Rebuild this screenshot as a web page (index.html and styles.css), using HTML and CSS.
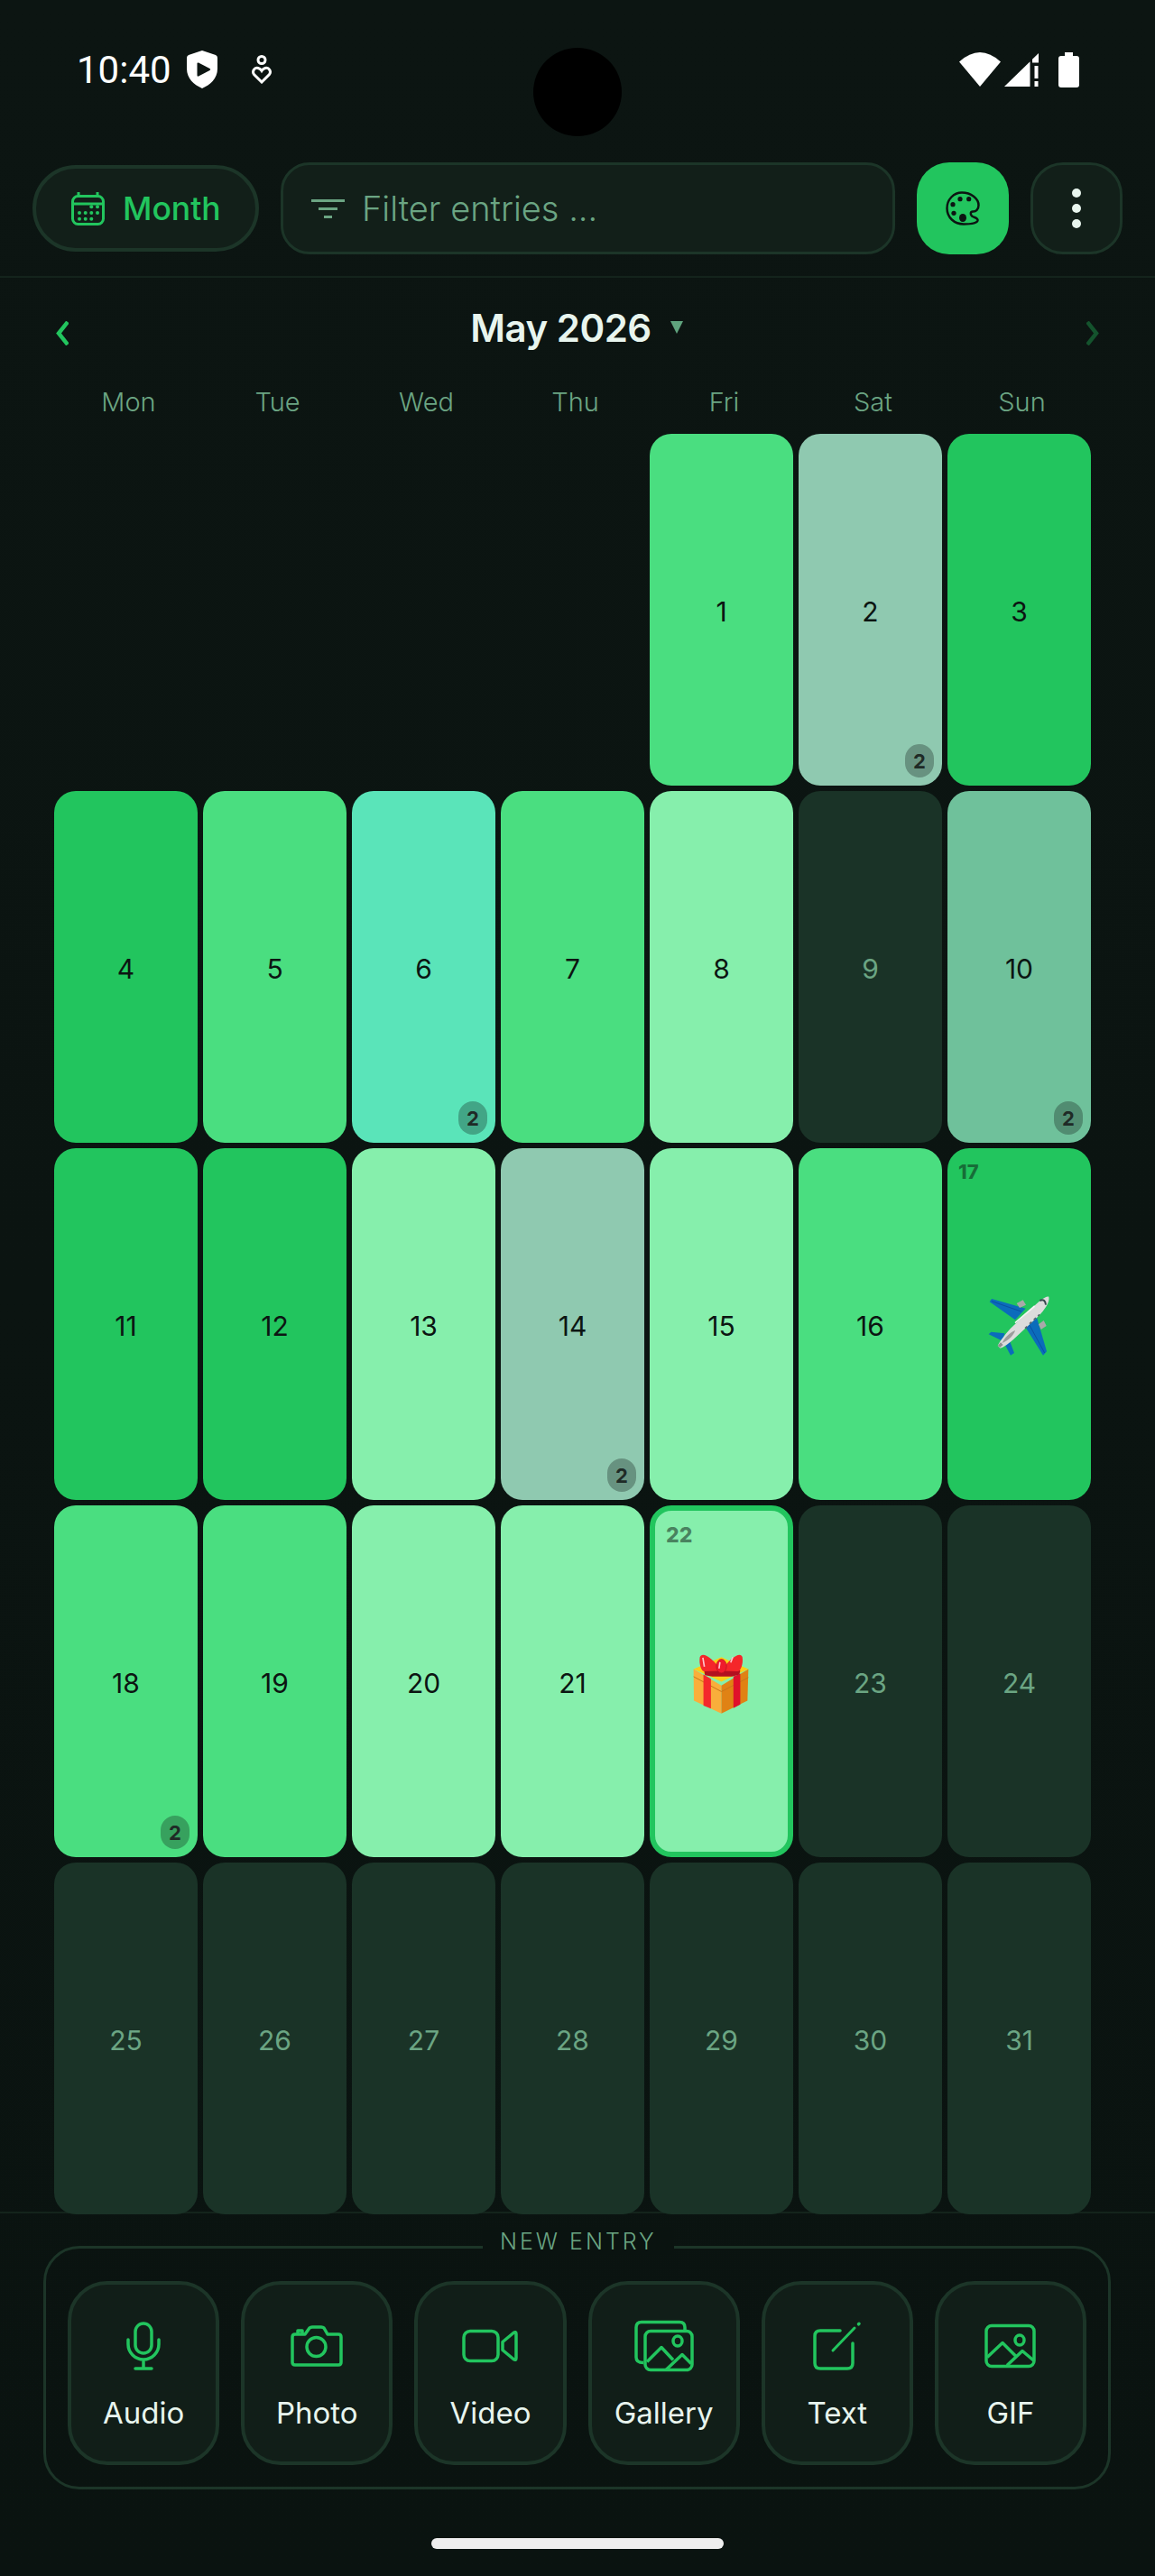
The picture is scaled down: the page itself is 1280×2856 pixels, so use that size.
FILE: index.html
```html
<!DOCTYPE html>
<html lang="en">
<head>
  <meta charset="UTF-8">
  <meta name="viewport" content="width=device-width, initial-scale=1.0">
  <title>Calendar</title>
  <link rel="stylesheet" href="styles.css">
</head>
<body>
  <div class="status">
    <span class="time">10:40</span>
    <svg class="shield" width="34" height="42" viewBox="0 0 34 42"><path d="M17 0L32 5Q34 6 34 8V20C34 31 26 38 17 42C8 38 0 31 0 20V8Q0 6 2 5Z" fill="#fff"/><path d="M11.5 14.5Q11.5 13 13 13.500L25.500 20Q27 21 25.500 22L13 28.500Q11.500 29 11.500 27.500Z" fill="#0c1512"/></svg>
    <svg class="care" width="22" height="32" viewBox="0 0 22 32" fill="none" stroke="#fff" stroke-width="3"><circle cx="11" cy="5.500" r="4"/><path d="M11 30L2.500 21.500C0 18 3 13.500 7 14.500C9 15 10 16 11 17.500C12 16 13 15 15 14.500C19 13.500 22 18 19.500 21.500Z"/></svg>
    <div class="status-right">
      <svg width="46" height="38" viewBox="0 0 46 38"><path d="M0 10.500Q23 -10.500 46 10.500L23 38Z" fill="#fff"/></svg>
      <svg width="38" height="37" viewBox="0 0 38 37" fill="#fff"><path d="M0 37L28.500 9.300V37Z"/><path d="M31 6.800L38 0V10.500H31Z"/><rect x="33.500" y="14" width="4" height="14"/><rect x="33.500" y="31" width="4" height="6"/></svg>
      <svg class="battery" width="23" height="39" viewBox="0 0 23 39" fill="#fff"><rect x="7" width="9" height="6"/><rect y="4" width="23" height="35" rx="3"/></svg>
    </div>
  </div>
  <div class="cutout"></div>

  <div class="toolbar">
    <div class="view-pill">
      <svg width="37" height="37" viewBox="0 0 37 37" fill="none" stroke="#22c55e" stroke-width="3">
        <rect x="1.500" y="4.500" width="34" height="31" rx="6"/>
        <path d="M1.500 13H35.500M8 0V4M29 0V4"/>
        <g fill="#22c55e" stroke="none">
          <circle cx="22.300" cy="16.300" r="2"/><circle cx="29" cy="16.300" r="2"/>
          <circle cx="9" cy="23" r="2"/><circle cx="15.700" cy="23" r="2"/><circle cx="22.300" cy="23" r="2"/><circle cx="29" cy="23" r="2"/>
          <circle cx="9" cy="29.700" r="2"/><circle cx="15.700" cy="29.700" r="2"/><circle cx="22.300" cy="29.700" r="2"/>
        </g>
      </svg>
      <span>Month</span>
    </div>
    <div class="filter">
      <svg width="37" height="21" viewBox="0 0 37 21" fill="none" stroke="#6ba583" stroke-width="3"><path d="M0 1.500H37M8 10.500H29M14 19.500H23"/></svg>
      <span>Filter entries ...</span>
    </div>
    <div class="square-btn palette-btn">
      <svg width="38" height="38" viewBox="0 0 38 38" fill="none" stroke="#0c1512" stroke-width="2.500">
        <path d="M18 1.500C28 1.500 36.500 8 36.500 15.500C36.500 20 33.500 23 30 22.500C27.500 22.500 27 25.500 29 27.500C32 29.500 36 29.500 35.500 32.500C34.500 36 27 36.500 20 36.500C9.500 36.500 1.500 29 1.500 19C1.500 9 9 1.500 18 1.500Z"/>
        <g fill="#0c1512" stroke="none">
          <circle cx="16" cy="8.700" r="2.600"/><circle cx="25.700" cy="8.700" r="2.600"/><circle cx="8" cy="14.700" r="2.600"/><circle cx="9" cy="24.300" r="2.600"/><ellipse cx="19" cy="29.500" rx="4" ry="4.500"/>
        </g>
      </svg>
    </div>
    <div class="square-btn more-btn">
      <svg width="10" height="44" viewBox="0 0 10 44" fill="#e8f5ee"><circle cx="5" cy="5" r="5"/><circle cx="5" cy="22" r="5"/><circle cx="5" cy="39" r="5"/></svg>
    </div>
  </div>

  <div class="month-nav">
    <svg class="chevron" width="14" height="27" viewBox="0 0 14 27" fill="none" stroke="#22c55e" stroke-width="4.500"><path d="M13 1L3 13.500L13 26"/></svg>
    <div class="month-title">
      <span>May 2026</span>
      <i class="caret"></i>
    </div>
    <svg class="chevron" width="14" height="27" viewBox="0 0 14 27" fill="none" stroke="#14532d" stroke-width="4.500"><path d="M1 1L11 13.500L1 26"/></svg>
  </div>

  <div class="weekdays">
    <span>Mon</span><span>Tue</span><span>Wed</span><span>Thu</span><span>Fri</span><span>Sat</span><span>Sun</span>
  </div>

  <div class="grid">
    <div></div><div></div><div></div><div></div>
    <div class="day mid">1</div>
    <div class="day sage">2<b class="badge">2</b></div>
    <div class="day strong">3</div>

    <div class="day strong">4</div>
    <div class="day mid">5</div>
    <div class="day aqua">6<b class="badge">2</b></div>
    <div class="day mid">7</div>
    <div class="day light">8</div>
    <div class="day empty">9</div>
    <div class="day moss">10<b class="badge">2</b></div>

    <div class="day strong">11</div>
    <div class="day strong">12</div>
    <div class="day light">13</div>
    <div class="day sage">14<b class="badge">2</b></div>
    <div class="day light">15</div>
    <div class="day mid">16</div>
    <div class="day strong">
      <small class="corner">17</small>
      <svg class="emoji" width="70" height="70" viewBox="60 45 210 210">
        <path d="M65 70L72 60L185 92L150 130Z" fill="#0b6cbb"/>
        <path d="M185 155L222 122L255 235L243 248Z" fill="#0b6cbb"/>
        <path d="M72 68L170 102M198 148L248 240" stroke="#0a4fa3" stroke-width="3" fill="none"/>
        <path d="M155 75L176 64L186 80L165 90Z" fill="#a9a9a9"/>
        <path d="M228 145L245 132L254 150L236 162Z" fill="#a9a9a9"/>
        <path d="M62 178L70 170L115 175L108 200Z" fill="#0b6cbb"/>
        <path d="M115 210L130 195L147 240L135 248Z" fill="#0b6cbb"/>
        <path d="M262 53C266 70 250 95 225 120L150 190C130 208 112 222 100 224L92 216C100 200 115 180 135 158L205 92C225 72 250 50 262 53Z" fill="#dcdcdc"/>
        <path d="M100 222L92 216L102 205L110 213Z" fill="#8f8f8f"/>
        <path d="M106 208C115 190 128 175 150 165C146 180 130 197 106 208Z" fill="#9c9c9c"/>
        <path d="M150 140L215 84" stroke="#f4f4f4" stroke-width="5" fill="none"/>
        <path d="M232 66Q250 58 252 80" stroke="#37474f" stroke-width="6" fill="none"/>
        <path d="M183 158L190 152M198 143L205 137M212 130L219 123M226 118L231 112" stroke="#56646e" stroke-width="5" fill="none"/>
      </svg>
    </div>

    <div class="day mid">18<b class="badge">2</b></div>
    <div class="day mid">19</div>
    <div class="day light">20</div>
    <div class="day light">21</div>
    <div class="day light today">
      <small class="corner">22</small>
      <svg class="emoji" width="73" height="77" viewBox="190 530 220 230">
        <path d="M207 600L300 655V748L208 705Z" fill="#f9ae3b"/>
        <path d="M300 655L390 600L387 705L300 748Z" fill="#e08214"/>
        <path d="M207 600L300 560L390 600L300 642Z" fill="#fdd017"/>
        <path d="M207 625L300 675L390 628" stroke="#c8741a" stroke-width="3" fill="none"/>
        <path d="M240 618L265 632V732L240 722Z" fill="#f4282c"/>
        <path d="M340 625L363 615V718L340 730Z" fill="#e0102a"/>
        <path d="M242 604H363L360 618L335 625H270L245 620Z" fill="#b3101f"/>
        <path d="M300 606C270 560 235 540 228 560C224 585 235 612 245 607Z" fill="#f5262a"/>
        <path d="M300 606C330 560 365 540 370 560C374 585 362 612 352 607Z" fill="#f5262a"/>
        <ellipse cx="300" cy="590" rx="17" ry="23" fill="#ef1c2c" stroke="#b3101f" stroke-width="2"/>
        <path d="M238 562L243 592M295 577L292 598M338 560L331 578" stroke="#ffc4cc" stroke-width="5" fill="none"/>
      </svg>
    </div>
    <div class="day empty">23</div>
    <div class="day empty">24</div>

    <div class="day empty">25</div>
    <div class="day empty">26</div>
    <div class="day empty">27</div>
    <div class="day empty">28</div>
    <div class="day empty">29</div>
    <div class="day empty">30</div>
    <div class="day empty">31</div>
  </div>

  <div class="footer">
    <div class="new-entry">
      <span class="legend">NEW ENTRY</span>
      <div class="entry-btn">
        <svg width="38" height="54" viewBox="0 0 38 54" fill="none" stroke="#22c55e" stroke-width="3.500" stroke-linecap="round"><rect x="10" y="2" width="18" height="33" rx="9"/><path d="M2 20V25A17 17 0 0 0 36 25V20M19 42V52M10 52H28"/></svg>
        <span>Audio</span>
      </div>
      <div class="entry-btn">
        <svg width="58" height="46" viewBox="0 0 58 46" fill="none" stroke="#22c55e" stroke-width="3.500" stroke-linejoin="round"><path d="M5 10H16L21 3Q22 2 24 2H34Q36 2 37 3L41 10H53Q56 10 56 13V41Q56 44 53 44H5Q2 44 2 41V13Q2 10 5 10Z"/><path d="M8 9V6H13V9"/><circle cx="28.500" cy="24" r="10.500"/></svg>
        <span>Photo</span>
      </div>
      <div class="entry-btn">
        <svg width="62" height="37" viewBox="0 0 62 37" fill="none" stroke="#22c55e" stroke-width="3.500" stroke-linejoin="round"><rect x="2" y="2" width="38" height="33" rx="7"/><path d="M45 14L57 4Q60 2 60 5V32Q60 35 57 33L45 23Z"/></svg>
        <span>Video</span>
      </div>
      <div class="entry-btn">
        <svg width="66" height="57" viewBox="0 0 66 57" fill="none" stroke="#22c55e" stroke-width="3.500" stroke-linejoin="round"><path d="M10 47Q2 47 2 41V8Q2 2 8 2H50Q56 2 56 8V11"/><rect x="12" y="12" width="52" height="43" rx="6"/><ellipse cx="48" cy="23" rx="5" ry="5.500"/><path d="M14 46L30 30L43 44M35 55L53 38L63 48"/></svg>
        <span>Gallery</span>
      </div>
      <div class="entry-btn">
        <svg width="54" height="54" viewBox="0 0 54 54" fill="none" stroke="#22c55e" stroke-width="3.500" stroke-linecap="round"><path d="M30 10H8Q2 10 2 16V46Q2 52 8 52H38Q44 52 44 46V24"/><path d="M22 32L46 7" stroke-width="3"/><path d="M50.500 2.800L51 2.300"/></svg>
        <span>Text</span>
      </div>
      <div class="entry-btn">
        <svg width="57" height="49" viewBox="0 0 57 49" fill="none" stroke="#22c55e" stroke-width="3.500" stroke-linejoin="round"><rect x="2" y="2" width="53" height="45" rx="6"/><ellipse cx="39" cy="18" rx="5" ry="5.500"/><path d="M3 37L20 21L36 37M25 46L42 30L55 41"/></svg>
        <span>GIF</span>
      </div>
    </div>
    <div class="home-bar"></div>
  </div>
</body>
</html>
```

FILE: styles.css
```css
* {
  box-sizing: border-box;
}
body {
  margin: 0;
  width: 1280px;
  height: 2856px;
  overflow: hidden;
  position: relative;
  font-family: Inter, "Liberation Sans", sans-serif;
  background: linear-gradient(#0c1512, #0a1310);
  color: #e8f5ee;
}

/* status bar */
.status {
  height: 154px;
  margin-bottom: 26px;
  padding: 0 84px 0 85px;
  display: flex;
  align-items: center;
}
.time {
  font-family: Roboto, sans-serif;
  font-size: 42px;
  color: #fff;
}
.shield {
  margin-left: 17px;
}
.care {
  margin-left: 38px;
}
.status-right {
  margin-left: auto;
  display: flex;
  align-items: center;
  gap: 4px;
}
.battery {
  margin-left: 18px;
}
.cutout {
  position: absolute;
  left: 591px;
  top: 53px;
  width: 98px;
  height: 98px;
  border-radius: 50%;
  background: #000;
}

/* top controls */
.toolbar {
  display: flex;
  align-items: center;
  gap: 24px;
  padding: 0 36px 24px;
  border-bottom: 2px solid #14241c;
}
.view-pill {
  width: 251px;
  height: 96px;
  display: flex;
  align-items: center;
  gap: 20px;
  padding-left: 39px;
  border: 4px solid #1c3528;
  border-radius: 48px;
  background: #121f19;
  color: #22c55e;
  font-size: 35.5px;
  font-weight: 500;
}
.filter {
  flex: 1;
  height: 102px;
  display: flex;
  align-items: center;
  gap: 19px;
  padding-left: 31px;
  border: 3px solid #1c3528;
  border-radius: 32px;
  background: #121f19;
  color: #6ba583;
  font-size: 38px;
  font-weight: 300;
}
.square-btn {
  width: 102px;
  height: 102px;
  display: flex;
  align-items: center;
  justify-content: center;
  border-radius: 36px;
}
.palette-btn {
  background: #22c55e;
}
.more-btn {
  background: #121f19;
  border: 3px solid #1c3528;
}

/* month header */
.month-nav {
  height: 110px;
  padding: 0 62px;
  display: flex;
  align-items: center;
  justify-content: space-between;
}
.chevron {
  margin-top: 12px;
}
.month-title {
  display: flex;
  align-items: center;
  gap: 21px;
  margin-right: 2px;
  font-size: 42px;
  font-weight: 600;
  letter-spacing: -0.5px;
}
.caret {
  width: 0;
  height: 0;
  border-left: 7px solid transparent;
  border-right: 7px solid transparent;
  border-top: 14px solid #5fa37d;
}
.weekdays {
  height: 54px;
  margin-bottom: 9px;
  padding: 0 60px 0 66px;
  display: grid;
  grid-template-columns: repeat(7, 153px);
  column-gap: 12px;
  align-items: center;
  justify-items: center;
  color: #6ba583;
  font-size: 29px;
  font-weight: 300;
}

/* calendar */
.grid {
  position: relative;
  z-index: 1;
  margin-bottom: -3px;
  padding-left: 60px;
  display: grid;
  grid-template-columns: repeat(7, 159px);
  grid-auto-rows: 390px;
  gap: 6px;
}
.day {
  position: relative;
  padding-top: 3px;
  display: flex;
  align-items: center;
  justify-content: center;
  border-radius: 24px;
  color: #0c1512;
  font-size: 30px;
}
.strong { background: #22c55e; }
.mid { background: #4ade80; }
.light { background: #86efac; }
.aqua { background: #5ae4b9; }
.sage { background: #8fc9b0; }
.moss { background: #6fc19b; }
.empty {
  background: #1a3327;
  color: #6ba583;
}
.today {
  border: 6px solid #22c55e;
}
.badge {
  position: absolute;
  right: 9px;
  bottom: 9px;
  width: 32px;
  height: 37px;
  display: flex;
  align-items: center;
  justify-content: center;
  border-radius: 16px;
  background: rgba(12, 21, 18, 0.3);
  color: #1f2a26;
  font-size: 22px;
  font-weight: 700;
}
.corner {
  position: absolute;
  left: 12px;
  top: 13px;
  color: rgba(12, 21, 18, 0.5);
  font-size: 22px;
  font-weight: 800;
}
.today .corner {
  top: 13px;
  font-size: 23px;
}

/* bottom panel */
.footer {
  padding-top: 36px;
  border-top: 2px solid #14241c;
}
.new-entry {
  position: relative;
  width: 1183px;
  height: 270px;
  margin-left: 48px;
  padding: 36px 24px 24px;
  display: flex;
  gap: 24px;
  border: 3px solid #1c3528;
  border-radius: 40px;
}
.legend {
  position: absolute;
  left: 484px;
  top: -23px;
  padding: 0 19px;
  background: #0a1310;
  color: #6ba583;
  font-size: 25px;
  font-weight: 300;
  letter-spacing: 3px;
}
.entry-btn {
  flex: 1;
  height: 204px;
  display: flex;
  flex-direction: column;
  align-items: center;
  border: 4px solid #1c3528;
  border-radius: 44px;
  background: #111e18;
  font-size: 33px;
  font-weight: 400;
}
.entry-btn svg {
  height: 64px;
  margin-top: 36px;
  margin-bottom: 22px;
}
.home-bar {
  width: 324px;
  height: 12px;
  margin: 54px auto 0;
  border-radius: 6px;
  background: #eee;
}
```
